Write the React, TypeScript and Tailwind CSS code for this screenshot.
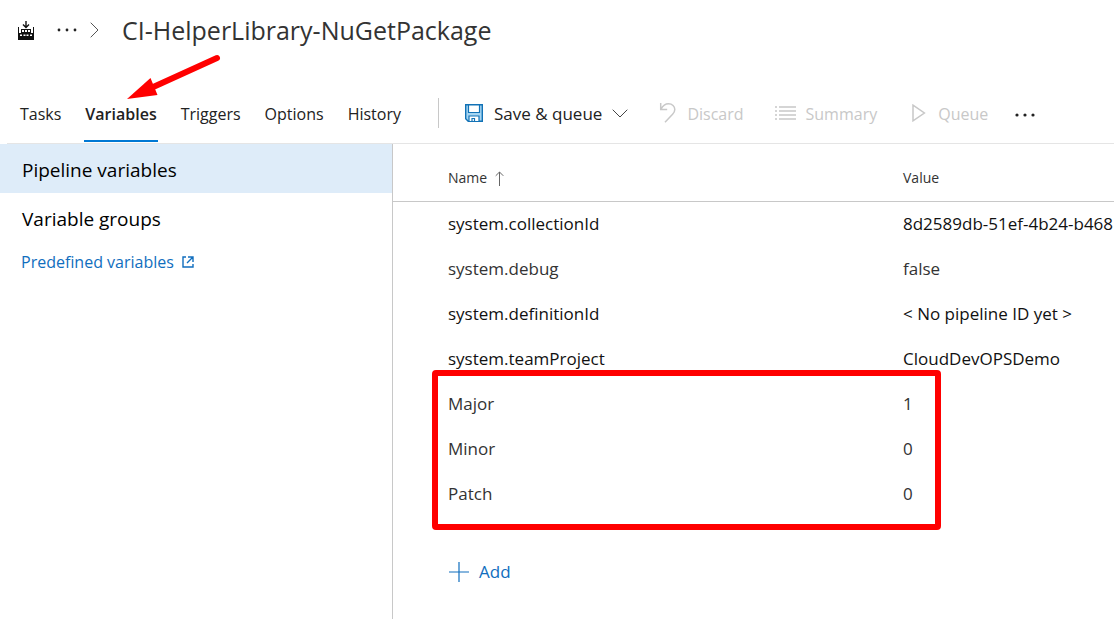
import type { ReactNode } from "react";

interface Variable {
  name: string;
  value: string;
  editable?: boolean;
}

const tabs = ["Tasks", "Variables", "Triggers", "Options", "History"];

const variables: Variable[] = [
  { name: "system.collectionId", value: "8d2589db-51ef-4b24-b468" },
  { name: "system.debug", value: "false", editable: true },
  { name: "system.definitionId", value: "< No pipeline ID yet >" },
  { name: "system.teamProject", value: "CloudDevOPSDemo" },
  { name: "Major", value: "1", editable: true },
  { name: "Minor", value: "0", editable: true },
  { name: "Patch", value: "0", editable: true },
];

function BuildIcon() {
  return (
    <svg width="16" height="19" viewBox="0 0 16 19" aria-hidden="true">
      <path d="M8 0v6.500M5 3.500l3 3 3-3" fill="none" stroke="#111" strokeWidth="1.4" />
      <path d="M0 6h1v6h2V8h10v4h2V6h1v13H0z" fill="#111" />
      <path d="M4 9h2v2H4zM7 9h2v2H7zM10 9h2v2h-2zM2 13.500h2v1.500H2zM5.500 13.500h2v1.500h-2zM8.500 13.500h2v1.500h-2zM12 13.500h2v1.500h-2z" fill="#fff" />
    </svg>
  );
}

function Dots({ size }: { size: number }) {
  return (
    <svg width="22" height="4" viewBox="0 0 22 4" fill="#222" aria-hidden="true">
      <circle cx="3" cy="2" r={size} />
      <circle cx="11" cy="2" r={size} />
      <circle cx="19" cy="2" r={size} />
    </svg>
  );
}

function SaveIcon() {
  return (
    <svg width="20" height="20" viewBox="0 0 20 20" fill="none" aria-hidden="true">
      <path d="M1.700 1.700h16.600v16.600H4.200l-2.500-2.500z" fill="#a5d5f2" stroke="#1272b6" strokeWidth="1.4" />
      <path d="M4.500 2h11v7.500h-11z" fill="#fff" stroke="#1272b6" strokeWidth="1.2" />
      <path d="M5 18v-5h10v5" fill="#fff" stroke="#1272b6" strokeWidth="1.2" />
      <path d="M8 18v-2.500h2.500V18" stroke="#1272b6" strokeWidth="1.2" />
    </svg>
  );
}

function DiscardIcon() {
  return (
    <svg width="18" height="22" viewBox="0 0 18 22" fill="none" stroke="#c8c8c8" strokeWidth="1.5" aria-hidden="true">
      <path d="M1.700 1v6.500h6.500M2 7.200C4 3.400 6.500 1.800 9.500 1.800c3.700 0 6.300 2.500 6.300 5.700 0 2-.8 3.300-2.200 4.800L6 20.300" />
    </svg>
  );
}

function SummaryIcon() {
  return (
    <svg width="21" height="16" viewBox="0 0 21 16" stroke="#c8c8c8" strokeWidth="1.3" aria-hidden="true">
      <path d="M0 2h2M4 2h17M0 6h2M4 6h17M0 10h2M4 10h17M0 14h2M4 14h17" />
    </svg>
  );
}

function QueueIcon() {
  return (
    <svg width="14" height="18" viewBox="0 0 14 18" fill="none" stroke="#c8c8c8" strokeWidth="1.5" aria-hidden="true">
      <path d="M1 1.200 12.400 9 1 16.800z" />
    </svg>
  );
}

function DisabledAction({ icon, label, className }: { icon: ReactNode; label: string; className: string }) {
  return (
    <button type="button" disabled className={`flex items-center text-base text-[#c8c8c8] ${className}`}>
      {icon}
      <span className="pt-0.5">{label}</span>
    </button>
  );
}

export default function App() {
  return (
    <div className="relative flex min-h-screen flex-col overflow-hidden bg-white font-['Open_Sans',sans-serif] text-[17px] leading-6 text-[#222]">
      {/* Breadcrumb */}
      <header className="flex h-[60px] shrink-0 items-center pl-[18px]">
        <BuildIcon />
        <button type="button" aria-label="More" className="ml-[22px]">
          <Dots size={1.4} />
        </button>
        <svg width="9" height="16" viewBox="0 0 9 16" fill="none" stroke="#555" className="ml-3" aria-hidden="true">
          <path d="m.7.7 7.300 7.300-7.300 7.300" />
        </svg>
        <h1 className="ml-[23px] text-[25px] leading-8 whitespace-nowrap text-[#333]">CI-HelperLibrary-NuGetPackage</h1>
      </header>

      {/* Tabs and commands */}
      <div className="ml-[7px] flex h-[84px] shrink-0 items-end border-b border-[#e5e5e5] pl-3 whitespace-nowrap">
        <nav className="flex gap-[22px] text-base">
          {tabs.map((tab) => (
            <button
              key={tab}
              type="button"
              className={
                tab === "Variables"
                  ? "mb-px h-[42px] border-b-2 border-[#0078d4] px-px pb-3 font-semibold"
                  : "mb-px h-[42px] border-b-2 border-transparent px-px pb-3"
              }
            >
              {tab}
            </button>
          ))}
        </nav>
        <div className="mb-[15px] ml-9 flex h-[30px] items-center border-l border-[#c8c8c8] pl-[25px]">
          <button type="button" className="flex items-center gap-2.5">
            <SaveIcon />
            <span className="pt-0.5">Save &amp; queue</span>
            <svg width="16" height="9" viewBox="0 0 16 9" fill="none" stroke="#444" aria-hidden="true">
              <path d="m.7.7 7.300 7.300 7.300-7.300" />
            </svg>
          </button>
          <DisabledAction icon={<DiscardIcon />} label="Discard" className="ml-[31px] gap-2.5" />
          <DisabledAction icon={<SummaryIcon />} label="Summary" className="ml-[31px] gap-2.5" />
          <DisabledAction icon={<QueueIcon />} label="Queue" className="ml-[35px] gap-3" />
          <button type="button" aria-label="More actions" className="ml-[26px] pt-1">
            <Dots size={1.6} />
          </button>
        </div>
      </div>

      <div className="flex grow">
        <aside className="w-[393px] shrink-0 border-r border-[#c8c8c8]">
          <button type="button" className="block h-[49px] w-full bg-[#deecf9] px-[22px] pt-0.5 text-left text-[19px] text-black">
            Pipeline variables
          </button>
          <button type="button" className="block h-[49px] w-full px-[22px] pt-0.5 text-left text-[19px] text-black">
            Variable groups
          </button>
          <a href="#predefined" className="mt-2 ml-[21px] inline-flex items-center gap-2 text-base text-[#106ebe]">
            Predefined variables
            <svg width="12" height="12" viewBox="0 0 12 12" fill="none" stroke="#106ebe" strokeWidth="1.4" aria-hidden="true">
              <path d="M4 1H1v10h10V8M6 1h5v5M11 1 5 7" />
            </svg>
          </a>
        </aside>

        <main className="min-w-0 grow overflow-hidden">
          <table className="w-full table-fixed text-left whitespace-nowrap">
            <thead>
              <tr className="h-[57px] border-b border-[#c8c8c8] text-sm text-[#333]">
                <th className="w-[510px] pt-3 pl-[55px] font-normal">
                  <span className="flex items-center gap-2">
                    Name
                    <svg width="9" height="15" viewBox="0 0 9 15" fill="none" stroke="#666" aria-hidden="true">
                      <path d="M4.500 15V1M.7 4.800 4.500 1l3.800 3.800" />
                    </svg>
                  </span>
                </th>
                <th className="pt-3 font-normal">Value</th>
              </tr>
            </thead>
            <tbody>
              {variables.map(({ name, value, editable }) => (
                <tr key={name} className={editable ? "h-[45px] text-[#333]" : "h-[45px] text-[#111]"}>
                  <td className="pl-[55px]">{name}</td>
                  <td>{value}</td>
                </tr>
              ))}
            </tbody>
          </table>
          <button type="button" className="mt-11 ml-14 flex items-center gap-2.5 text-[#106ebe]">
            <svg width="20" height="20" viewBox="0 0 20 20" stroke="#106ebe" strokeWidth="1.2" aria-hidden="true">
              <path d="M10 0v20M0 10h20" />
            </svg>
            Add
          </button>
        </main>
      </div>

      {/* Red callouts over the active tab and the version variables */}
      <svg width="94" height="48" viewBox="0 0 94 48" className="pointer-events-none absolute top-[53px] left-[127px]" aria-hidden="true">
        <path d="M90 5 24 35" stroke="#f00" strokeWidth="6" strokeLinecap="round" />
        <path d="M0 46 23.500 25l7 17z" fill="#f00" />
      </svg>
      <div className="pointer-events-none absolute top-[370px] left-[432px] h-[160px] w-[509px] rounded-sm border-6 border-[#f00]" />
    </div>
  );
}
